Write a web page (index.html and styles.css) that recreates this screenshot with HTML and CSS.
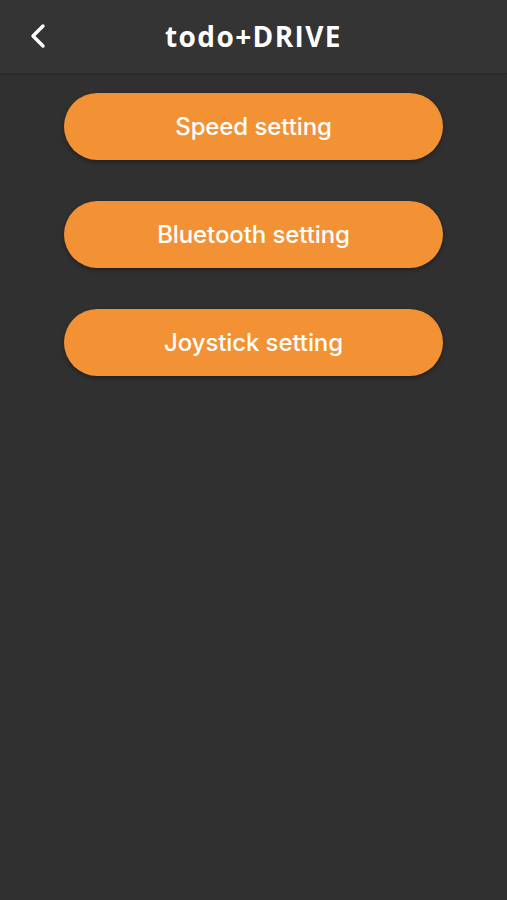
FILE: index.html
```html
<!DOCTYPE html>
<html>
<head>
<meta charset="utf-8">
<link rel="stylesheet" href="styles.css">
</head>
<body>
<div class="app">
  <header class="topbar">
    <button class="back" aria-label="Back">
      <svg width="20" height="26" viewBox="0 0 20 26"><path d="M15 3 L5 13 L15 23" fill="none" stroke="#fff" stroke-width="3.4" stroke-linecap="round" stroke-linejoin="round"/></svg>
    </button>
    <h1 class="title">todo+DRIVE</h1>
  </header>
  <main class="menu">
    <button class="pill">Speed setting</button>
    <button class="pill">Bluetooth setting</button>
    <button class="pill">Joystick setting</button>
  </main>
</div>
</body>
</html>
```
FILE: styles.css
```css
html, body { margin: 0; padding: 0; }
body { background: #303030; height: 900px; overflow: hidden; }
.app { display: flex; flex-direction: column; min-height: 900px; }
.topbar {
  height: 73px;
  background: #343434;
  position: relative;
  display: flex;
  align-items: center;
  justify-content: center;
  box-shadow: 0 1px 3px rgba(0,0,0,0.25);
}
.back {
  position: absolute;
  left: 28px;
  top: 23px;
  background: none;
  border: 0;
  padding: 0;
  width: 20px;
  height: 26px;
}
.back svg { display: block; }
.title {
  margin: 0;
  font-family: "Open Sans", "DejaVu Sans", sans-serif;
  font-weight: 700;
  font-size: 28px;
  color: #fff;
  letter-spacing: 1.4px;
  line-height: 1;
  padding-bottom: 2px;
}
.menu {
  display: flex;
  flex-direction: column;
  align-items: center;
  gap: 41px;
  padding-top: 20px;
}
.pill {
  width: 379px;
  height: 67px;
  border: 0;
  border-radius: 34px;
  background: #F39235;
  color: #fff;
  font-family: Inter, Roboto, "Liberation Sans", sans-serif;
  font-size: 24px;
  font-weight: 500;
  box-shadow: 0 2px 4px rgba(0,0,0,0.35);
  letter-spacing: -0.1px;
}
```
